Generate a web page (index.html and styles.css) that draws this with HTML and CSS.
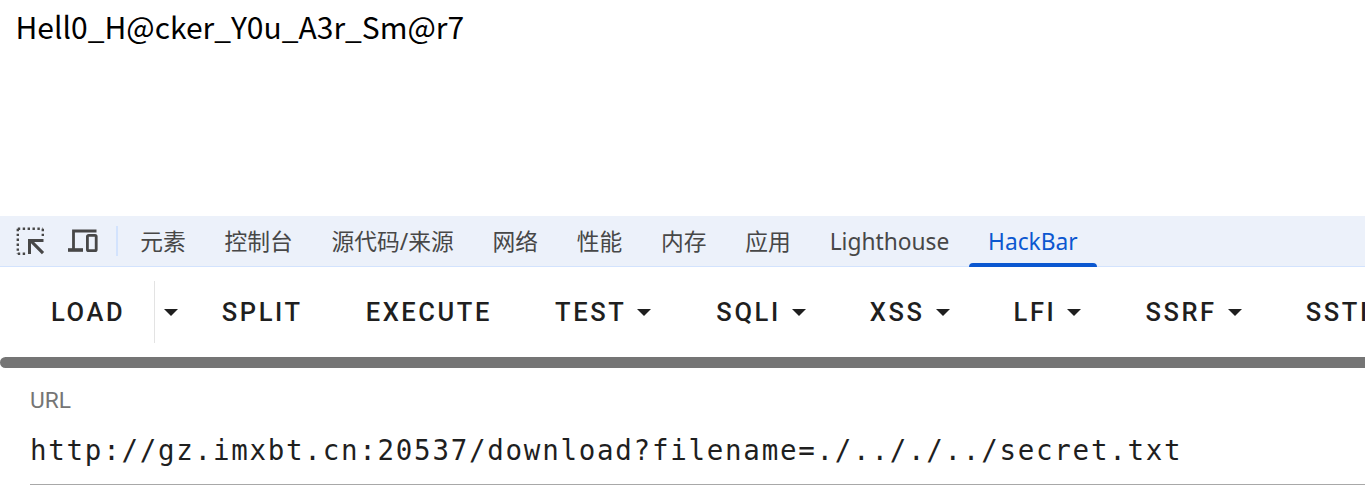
FILE: index.html
```html
<!DOCTYPE html>
<html lang="zh">
<head>
<meta charset="utf-8">
<title>HackBar</title>
<link rel="stylesheet" href="styles.css">
</head>
<body>
<main class="page"><p class="flag">Hell0_H@cker_Y0u_A3r_Sm@r7</p></main>
<section class="devtools">
  <nav class="tabbar">
    <div class="tools">
      <svg class="icon" width="30" height="30" viewBox="0 0 30 30" aria-hidden="true">
        <path d="M2.800 2.800h25M2.800 2.800v25M27.800 2.800v9M2.800 27.800h9" fill="none" stroke="#474747" stroke-width="2.4" stroke-dasharray="2.4 2.5"/>
        <path d="M13 13h15.500v3h-9.400l10 10-2.200 2.200-10.900-10.900V28H13z" fill="#474747"/>
      </svg>
      <svg class="icon" width="32" height="30" viewBox="0 0 32 30" aria-hidden="true">
        <path d="M5.500 23V5h23" fill="none" stroke="#474747" stroke-width="2.800"/>
        <path d="M0 24h15" fill="none" stroke="#474747" stroke-width="3.600"/>
        <rect x="19.400" y="9.400" width="8.800" height="15.200" rx="1.200" fill="none" stroke="#474747" stroke-width="2.800"/>
      </svg>
      <span class="sep"></span>
    </div>
    <a class="tab">元素</a>
    <a class="tab">控制台</a>
    <a class="tab">源代码/来源</a>
    <a class="tab">网络</a>
    <a class="tab">性能</a>
    <a class="tab">内存</a>
    <a class="tab">应用</a>
    <a class="tab">Lighthouse</a>
    <a class="tab active">HackBar</a>
  </nav>
  <div class="toolbar">
    <button class="btn load">LOAD</button>
    <button class="btn drop-only"><i class="caret"></i></button>
    <button class="btn split">SPLIT</button>
    <button class="btn execute">EXECUTE</button>
    <button class="btn test">TEST<i class="caret"></i></button>
    <button class="btn">SQLI<i class="caret"></i></button>
    <button class="btn">XSS<i class="caret"></i></button>
    <button class="btn">LFI<i class="caret"></i></button>
    <button class="btn">SSRF<i class="caret"></i></button>
    <button class="btn">SSTI<i class="caret"></i></button>
  </div>
  <div class="scrollbar"></div>
  <div class="field">
    <label class="field-label">URL</label>
    <div class="field-value">http://gz.imxbt.cn:20537/download?filename=./.././../secret.txt</div>
  </div>
</section>
</body>
</html>
```
FILE: styles.css
```css
* { box-sizing: border-box; }
html, body { margin: 0; height: 100%; overflow: hidden; background: #fff; }
.page { height: 216px; padding: 6px 15.500px; }
.flag { margin: 0; font: 400 30px/40px "Noto Sans CJK SC", sans-serif; color: #000; }
.tabbar {
  display: flex; align-items: center; height: 51px;
  background: #ecf1fa; border-bottom: 1px solid #d3e3fd;
  font: 400 22.750px/30px "Noto Sans", "Noto Sans CJK SC", sans-serif; color: #474747;
  white-space: nowrap;
}
.tools { display: flex; align-items: center; width: 120.800px; flex: none; padding-left: 15px; }
.tools .icon { flex: none; }
.tools .icon + .icon { margin-left: 23px; }
.sep { width: 2px; height: 30px; background: #d3e3fd; margin-left: 16px; }
.tab { display: flex; align-items: center; height: 50px; padding: 2px 19.400px 0; position: relative; }
.tab.active { color: #0b57d0; }
.tab.active::after {
  content: ""; position: absolute; left: 0; right: 0; bottom: -1px; height: 4px;
  background: #0b57d0; border-radius: 4px 4px 0 0;
}
.toolbar {
  display: flex; align-items: center; height: 90px; padding-left: 19px;
  white-space: nowrap; overflow: hidden;
}
.btn {
  flex: none; display: flex; align-items: center; height: 62px; padding: 0 32px; border: 0; background: none;
  font: 500 25.500px/30px Roboto, sans-serif; letter-spacing: 2.600px; color: #1f1f1f;
}
.load { padding-right: 28.500px; border-right: 1px solid #e3e3e3; }
.drop-only { padding: 0 9px; }
.split { padding: 0 31px 0 35px; }
.execute { padding-right: 31px; }
.test { padding-right: 33px; }
.caret {
  display: block; width: 0; height: 0; margin-left: 11px;
  border-left: 7.500px solid transparent; border-right: 7.500px solid transparent; border-top: 7px solid #1f1f1f;
}
.drop-only .caret { margin: 0; }
.scrollbar { height: 11px; background: #757575; border-radius: 6px 0 0 6px; }
.field { padding: 18px 0 0 30px; }
.field-label { display: block; font: 400 22.750px/30px Roboto, sans-serif; color: #757575; }
.field-value {
  height: 69px; padding-top: 13px; border-bottom: 1px solid #a8a8a8; white-space: nowrap;
  font: 400 27.500px/42px "DejaVu Sans Mono", monospace; letter-spacing: 1.735px; color: #1f1f1f;
}
```
